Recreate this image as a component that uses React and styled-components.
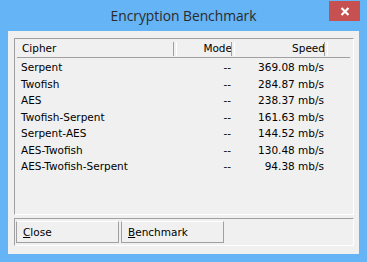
import React from "react";
import styled, { createGlobalStyle } from "styled-components";

const GlobalStyle = createGlobalStyle`
  html, body {
    margin: 0;
    padding: 0;
    background: #65b4f6;
  }
  * {
    box-sizing: border-box;
  }
`;

const Window = styled.div`
  width: 367px;
  height: 262px;
  background: #65b4f6;
  display: flex;
  flex-direction: column;
  font-family: "DejaVu Sans", Verdana, sans-serif;
  font-size: 10.5px;
  color: #000;
`;

const TitleBar = styled.div`
  position: relative;
  height: 31px;
  flex: none;
  display: flex;
  align-items: center;
  justify-content: center;
  padding-bottom: 1px;
  font-family: "Open Sans", "Noto Sans", sans-serif;
  font-size: 13.8px;
  color: #2b2b2b;
`;

const CloseBox = styled.div`
  position: absolute;
  top: 1px;
  right: 7px;
  width: 31px;
  height: 20px;
  background: #c75050;
  display: flex;
  align-items: center;
  justify-content: center;
`;

const Client = styled.div`
  flex: 1;
  margin: 0 8px 8px 8px;
  background: #f0f0f0;
  display: flex;
  flex-direction: column;
  padding: 7px 5px 8px 6px;
  gap: 3px;
`;

const Sunken = styled.div`
  border: 1px solid;
  border-color: #a0a0a0 #ffffff #ffffff #a0a0a0;
`;

const ListBox = styled(Sunken)`
  flex: 1;
  padding: 0 3px 0 1px;
  display: flex;
  flex-direction: column;
`;

const HeaderRow = styled.div`
  display: flex;
  height: 19px;
  border-bottom: 1px solid #a0a0a0;
  margin-bottom: 1px;
  margin-left: 1px;
`;

const HeaderCell = styled.div`
  width: ${(p) => p.$w}px;
  flex: ${(p) => (p.$w ? "none" : "1")};
  display: flex;
  align-items: center;
  justify-content: ${(p) => (p.$right ? "flex-end" : "flex-start")};
  padding: ${(p) => (p.$right ? "0 3px 0 0" : "0 0 0 5px")};
  position: relative;
  &::after {
    content: ${(p) => (p.$sep ? "''" : "none")};
    position: absolute;
    right: 0;
    top: 3px;
    bottom: 1px;
    width: 2px;
    border-left: 1px solid #a0a0a0;
    border-right: 1px solid #ffffff;
  }
`;

const Row = styled.div`
  display: flex;
  height: 16.5px;
  align-items: center;
`;

const Cell = styled.div`
  width: ${(p) => p.$w}px;
  flex: none;
  text-align: ${(p) => (p.$right ? "right" : "left")};
  padding: ${(p) => (p.$right ? "0 3px 0 0" : "0 0 0 5px")};
  white-space: nowrap;
`;

const ButtonBar = styled(Sunken)`
  height: 28px;
  flex: none;
  display: flex;
  gap: 2px;
  padding: 2px 1px 2px 1px;
`;

const Button = styled.div`
  width: 103px;
  height: 22px;
  border: 1px solid;
  border-color: #ffffff #a0a0a0 #a0a0a0 #a0a0a0;
  display: flex;
  align-items: center;
  padding-left: 6px;
  u {
    text-decoration: underline;
    text-underline-offset: 1px;
  }
`;

const rows = [
  ["Serpent", "369.08 mb/s"],
  ["Twofish", "284.87 mb/s"],
  ["AES", "238.37 mb/s"],
  ["Twofish-Serpent", "161.63 mb/s"],
  ["Serpent-AES", "144.52 mb/s"],
  ["AES-Twofish", "130.48 mb/s"],
  ["AES-Twofish-Serpent", "94.38 mb/s"],
];

export default function App() {
  return (
    <>
      <GlobalStyle />
      <Window>
        <TitleBar>
          Encryption Benchmark
          <CloseBox>
            <svg width="10" height="9" viewBox="0 0 10 9">
              <path d="M1.5 1 L8.5 8 M8.5 1 L1.5 8" stroke="#fff" strokeWidth="2.2" />
            </svg>
          </CloseBox>
        </TitleBar>
        <Client>
          <ListBox>
            <HeaderRow>
              <HeaderCell $w={160} $sep>Cipher</HeaderCell>
              <HeaderCell $w={58} $right $sep>Mode</HeaderCell>
              <HeaderCell $w={93} $right $sep>Speed</HeaderCell>
              <HeaderCell />
            </HeaderRow>
            {rows.map(([name, speed]) => (
              <Row key={name}>
                <Cell $w={160}>{name}</Cell>
                <Cell $w={58} $right>--</Cell>
                <Cell $w={93} $right>{speed}</Cell>
              </Row>
            ))}
          </ListBox>
          <ButtonBar>
            <Button>
              <span><u>C</u>lose</span>
            </Button>
            <Button>
              <span><u>B</u>enchmark</span>
            </Button>
          </ButtonBar>
        </Client>
      </Window>
    </>
  );
}
